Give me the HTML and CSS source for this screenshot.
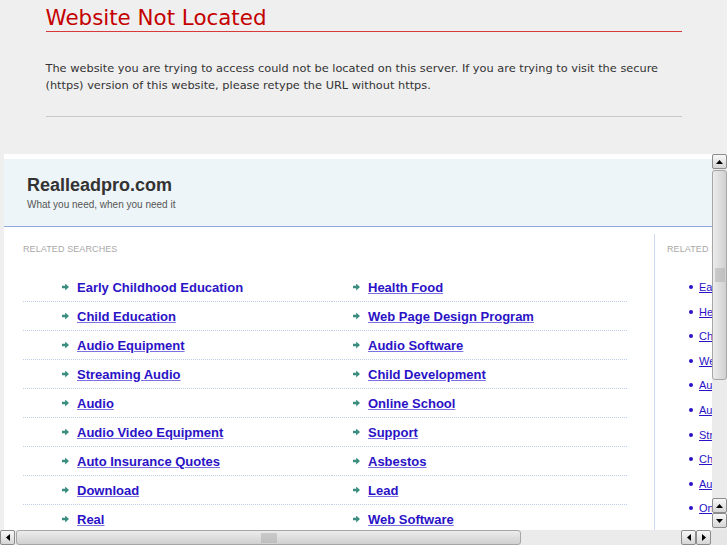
FILE: index.html
```html
<!DOCTYPE html>
<html lang="en">
<head>
    <meta charset="UTF-8">
    <meta name="viewport" content="width=device-width, initial-scale=1.0">
    <title>Website Not Located</title>
    <link rel="stylesheet" href="styles.css">
</head>
<body>
    <!-- Server notice -->
    <div class="notice">
        <h1>Website Not Located</h1>
        <p>The website you are trying to access could not be located on this server. If you are trying to visit the secure (https) version of this website, please retype the URL without https.</p>
        <hr>
    </div>

    <!-- Parked page frame -->
    <div class="frame">
        <div class="view">
            <div class="site-head">
                <div class="site-name">Realleadpro.com</div>
                <div class="site-tag">What you need, when you need it</div>
            </div>
            <div class="site-body">
                <div class="main-col">
                    <div class="label">RELATED SEARCHES</div>
                    <div class="lists">
                        <ul class="links col-a">
                            <li><span class="arrow"></span><a href="#" class="hover">Early Childhood Education</a></li>
                            <li><span class="arrow"></span><a href="#">Child Education</a></li>
                            <li><span class="arrow"></span><a href="#">Audio Equipment</a></li>
                            <li><span class="arrow"></span><a href="#">Streaming Audio</a></li>
                            <li><span class="arrow"></span><a href="#">Audio</a></li>
                            <li><span class="arrow"></span><a href="#">Audio Video Equipment</a></li>
                            <li><span class="arrow"></span><a href="#">Auto Insurance Quotes</a></li>
                            <li><span class="arrow"></span><a href="#">Download</a></li>
                            <li><span class="arrow"></span><a href="#">Real</a></li>
                        </ul>
                        <ul class="links col-b">
                            <li><span class="arrow"></span><a href="#">Health Food</a></li>
                            <li><span class="arrow"></span><a href="#">Web Page Design Program</a></li>
                            <li><span class="arrow"></span><a href="#">Audio Software</a></li>
                            <li><span class="arrow"></span><a href="#">Child Development</a></li>
                            <li><span class="arrow"></span><a href="#">Online School</a></li>
                            <li><span class="arrow"></span><a href="#">Support</a></li>
                            <li><span class="arrow"></span><a href="#">Asbestos</a></li>
                            <li><span class="arrow"></span><a href="#">Lead</a></li>
                            <li><span class="arrow"></span><a href="#">Web Software</a></li>
                        </ul>
                    </div>
                </div>
                <div class="side-col">
                    <div class="label">RELATED SEARCHES</div>
                    <ul class="side-links">
                        <li><a href="#">Early Childhood Education</a></li>
                        <li><a href="#">Health Food</a></li>
                        <li><a href="#">Child Education</a></li>
                        <li><a href="#">Web Page Design Program</a></li>
                        <li><a href="#">Audio Equipment</a></li>
                        <li><a href="#">Audio Software</a></li>
                        <li><a href="#">Streaming Audio</a></li>
                        <li><a href="#">Child Development</a></li>
                        <li><a href="#">Audio</a></li>
                        <li><a href="#">Online School</a></li>
                    </ul>
                </div>
            </div>
        </div>
        <div class="vbar">
            <span class="btn"><svg width="7" height="4" viewBox="0 0 7 4"><polygon points="0,4 7,4 3.5,0" fill="#000"/></svg></span>
            <span class="thumb v"><span class="grip"></span></span>
            <span class="track"></span>
            <span class="btn"><svg width="7" height="4" viewBox="0 0 7 4"><polygon points="0,4 7,4 3.5,0" fill="#000"/></svg></span>
            <span class="btn"><svg width="7" height="4" viewBox="0 0 7 4"><polygon points="0,0 7,0 3.5,4" fill="#000"/></svg></span>
        </div>
    </div>

    <div class="hbar">
        <span class="btn"><svg width="4" height="7" viewBox="0 0 4 7"><polygon points="4,0 4,7 0,3.5" fill="#000"/></svg></span>
        <span class="thumb h"><span class="grip"></span></span>
        <span class="track"></span>
        <span class="btn"><svg width="4" height="7" viewBox="0 0 4 7"><polygon points="4,0 4,7 0,3.5" fill="#000"/></svg></span>
        <span class="btn"><svg width="4" height="7" viewBox="0 0 4 7"><polygon points="0,0 0,7 4,3.5" fill="#000"/></svg></span>
        <span class="corner"></span>
    </div>
</body>
</html>
```

FILE: styles.css
```css
/* General */
html, body {
    margin: 0;
    padding: 0;
    height: 545px;
    overflow: hidden;
}
body {
    background-color: #efefef;
    font-family: "DejaVu Sans", sans-serif;
}
ul {
    list-style: none;
    margin: 0;
    padding: 0;
}

/* Server notice */
.notice {
    width: 636px;
    margin: 0 auto;
}
.notice h1 {
    margin: 5px 0 0;
    font-size: 21.4px;
    font-weight: normal;
    line-height: 26px;
    color: #c40000;
    border-bottom: 1px solid #d83a3a;
}
.notice p {
    margin: 28px 0 0;
    font-size: 11.35px;
    line-height: 17px;
    color: #333;
}
.notice hr {
    margin: 22px 0 0;
    border: none;
    border-top: 1px solid #c8c8c8;
}

/* Frame */
.frame {
    display: flex;
    height: 376px;
    margin-top: 37px;
    padding-left: 4px;
}
.view {
    width: 708px;
    overflow: hidden;
    background: white;
    padding-top: 5px;
    font-family: "Liberation Sans", Arial, sans-serif;
}
.site-head {
    height: 68px;
    padding: 15px 0 0 23px;
    box-sizing: border-box;
    background: #eef5f8;
    border-bottom: 1px solid #8ea8e0;
}
.site-name {
    font-size: 18px;
    font-weight: bold;
    line-height: 22px;
    color: #333;
}
.site-tag {
    margin-top: 3px;
    font-size: 10px;
    line-height: 12px;
    color: #555;
}
.site-body {
    display: flex;
    margin-top: 7px;
    height: 400px;
}
.main-col {
    flex: 0 0 650px;
    border-right: 1px solid #cddbf2;
    padding-top: 10px;
}
.label {
    padding-left: 19px;
    font-size: 9px;
    line-height: 10px;
    letter-spacing: 0.1px;
    color: #a8a8a8;
}
.lists {
    display: flex;
    gap: 1px;
    margin: 19px 0 0 19px;
}
.links li {
    display: flex;
    align-items: center;
    height: 28px;
    border-bottom: 1px dotted #bcd0ec;
}
.col-a {
    width: 307px;
}
.col-a li {
    padding-left: 39px;
}
.col-b {
    width: 296px;
}
.col-b li {
    padding-left: 22px;
}
.arrow {
    width: 7px;
    height: 7px;
    margin-right: 8px;
    background: #3a8d7f;
    clip-path: polygon(0 32%, 45% 32%, 45% 0, 100% 50%, 45% 100%, 45% 68%, 0 68%);
}
.links a {
    font-size: 13px;
    font-weight: bold;
    color: #2a12c6;
    text-decoration-color: #7d70e0;
}
.links a.hover {
    text-decoration: none;
}
.side-col {
    flex: 0 0 200px;
    padding-top: 10px;
}
.side-col .label {
    padding-left: 12px;
}
.side-links {
    margin-top: 21px;
    padding-left: 34px;
}
.side-links li {
    display: flex;
    align-items: center;
    height: 24.55px;
}
.side-links li::before {
    content: "";
    width: 4px;
    height: 4px;
    margin-right: 6px;
    border-radius: 50%;
    background: #2a12c6;
}
.side-links a {
    font-size: 11px;
    color: #2a12c6;
    white-space: nowrap;
}

/* Scrollbars */
.vbar {
    display: flex;
    flex-direction: column;
    width: 15px;
    background: #ebebeb;
    padding-bottom: 2px;
    box-sizing: border-box;
}
.hbar {
    display: flex;
    height: 15px;
    background: #ebebeb;
}
.btn {
    display: flex;
    align-items: center;
    justify-content: center;
    width: 13px;
    height: 13px;
    flex: 0 0 auto;
    border: 1px solid #8c8c8c;
    border-radius: 2px;
    background: linear-gradient(#f8f8f8, #d6d6d6);
}
.thumb {
    display: flex;
    align-items: center;
    justify-content: center;
    border: 1px solid #a6a6a6;
    border-radius: 3px;
    box-sizing: border-box;
}
.thumb.v {
    height: 210px;
    margin-top: 1px;
    background: linear-gradient(90deg, #ececec, #d0d0d0);
}
.thumb.h {
    width: 505px;
    margin-left: 1px;
    background: linear-gradient(#ececec, #d0d0d0);
}
.grip {
    background: radial-gradient(circle, #a8a8a8 0.6px, transparent 0.8px) 0 0 / 2px 2px;
}
.thumb.v .grip {
    width: 10px;
    height: 14px;
}
.thumb.h .grip {
    width: 16px;
    height: 10px;
}
.track {
    flex: 1;
}
.corner {
    width: 16px;
    background: #e6e6e6;
}
```
